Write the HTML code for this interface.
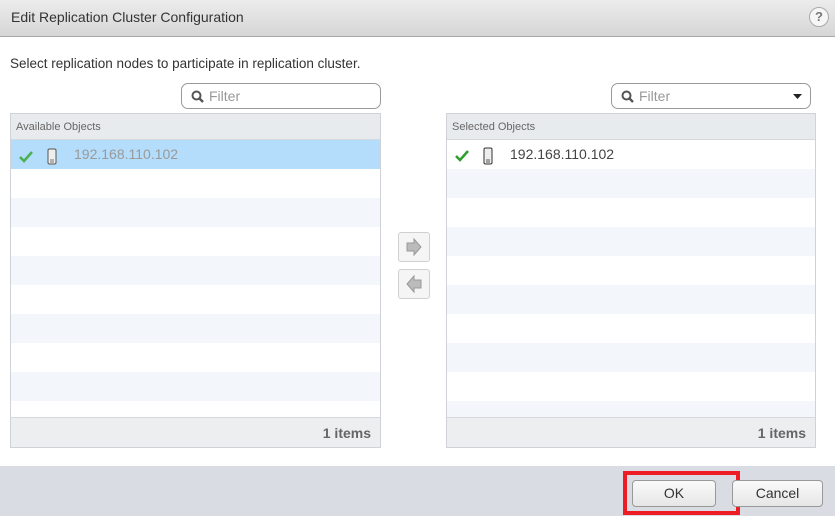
<!DOCTYPE html>
<html><head><style>
*{margin:0;padding:0;box-sizing:border-box}
body{width:835px;height:516px;overflow:hidden;background:#fff;font-family:"Liberation Sans",sans-serif;position:relative}
.title{position:absolute;left:0;top:0;width:835px;height:37px;background:linear-gradient(#ececec,#d6d6d6);border-bottom:1px solid #a8a8a8}
.title span{position:absolute;left:11px;top:9px;font-size:14px;color:#333}
.help{position:absolute;left:809px;top:7px;width:20px;height:20px;border-radius:50%;border:1px solid #aaa;background:#f6f6f6;font-size:13px;font-weight:bold;color:#777;text-align:center;line-height:18px}
.desc{position:absolute;left:10px;top:56px;font-size:13.5px;color:#333}
.filter{position:absolute;height:26px;border:1px solid #999;border-radius:7px;background:#fff;font-size:14px;color:#999}
.filter span{position:absolute;left:27px;top:4px}
.panel{position:absolute;top:113px;height:335px;border:1px solid #cfd3d7;background:#fff}
.hdr{height:26px;background:#e8ebee;border-bottom:1px solid #d6d9dc;font-size:11px;color:#666;padding:7px 0 0 5px}
.row{height:29px;background:#fff}
.s{background:#f3f6fa}
.foot{position:absolute;left:0;right:0;bottom:0;height:30px;background:#eceeef;border-top:1px solid #d6d9dc;font-size:14px;font-weight:bold;color:#666;text-align:right;padding:7px 9px 0 0}
.ip{position:absolute;top:146px;font-size:14px}
.arrbtn{position:absolute;left:398px;width:32px;height:30px;border:1px solid #d0d0d0;border-radius:3px;background:#f5f5f5}
.footer{position:absolute;left:0;top:466px;width:835px;height:50px;background:#d9dde3}
.btn{position:absolute;top:480px;height:27px;border:1px solid #999;border-radius:4px;background:linear-gradient(#fafafa,#e6e6e6);font-size:14px;color:#333;text-align:center;line-height:25px}
</style></head><body>
<div class="title"><span>Edit Replication Cluster Configuration</span><div class="help">?</div></div>
<div class="desc">Select replication nodes to participate in replication cluster.</div>

<div class="filter" style="left:181px;top:83px;width:200px"><svg style="position:absolute;left:9px;top:6px" width="13" height="13"><circle cx="5.5" cy="5.5" r="4" fill="none" stroke="#555" stroke-width="2"/><line x1="8.5" y1="8.5" x2="12" y2="12" stroke="#555" stroke-width="2.4"/></svg><span>Filter</span></div>
<div class="filter" style="left:611px;top:83px;width:200px"><svg style="position:absolute;left:9px;top:6px" width="13" height="13"><circle cx="5.5" cy="5.5" r="4" fill="none" stroke="#555" stroke-width="2"/><line x1="8.5" y1="8.5" x2="12" y2="12" stroke="#555" stroke-width="2.4"/></svg><span>Filter</span><svg style="position:absolute;left:181px;top:10px" width="9" height="6"><path d="M0 0H9L4.5 5Z" fill="#222"/></svg></div>

<div class="panel" style="left:10px;width:371px">
<div class="hdr">Available Objects</div>
<div class="row" style="background:#b4ddfb"></div><div class="row"></div><div class="row s"></div><div class="row"></div><div class="row s"></div><div class="row"></div><div class="row s"></div><div class="row"></div><div class="row s"></div><div class="row"></div>
<div class="foot">1 items</div>
</div>
<div class="panel" style="left:446px;width:370px">
<div class="hdr">Selected Objects</div>
<div class="row"></div><div class="row s"></div><div class="row"></div><div class="row s"></div><div class="row"></div><div class="row s"></div><div class="row"></div><div class="row s"></div><div class="row"></div><div class="row s"></div>
<div class="foot">1 items</div>
</div>

<svg style="position:absolute;left:19px;top:148px" width="80" height="18"><path d="M1 9L5 13L13 4" fill="none" stroke="#4caf50" stroke-width="2.5"/><rect x="29" y="1" width="8" height="15" rx="1.5" fill="#eee" stroke="#555"/><line x1="31" y1="12" x2="35" y2="12" stroke="#777"/><line x1="31" y1="14" x2="35" y2="14" stroke="#777"/></svg>
<div class="ip" style="left:74px;color:#999">192.168.110.102</div>
<svg style="position:absolute;left:455px;top:147px" width="80" height="20"><path d="M1 9L5 13L13 4" fill="none" stroke="#2e9e2e" stroke-width="2.5"/><rect x="29" y="1" width="8" height="16" rx="1.5" fill="#eee" stroke="#333"/><line x1="31" y1="13" x2="35" y2="13" stroke="#555"/><line x1="31" y1="15" x2="35" y2="15" stroke="#555"/></svg>
<div class="ip" style="left:510px;color:#444">192.168.110.102</div>

<div class="arrbtn" style="top:232px"><svg width="30" height="28"><path d="M8 10H15V6L22 14L15 22V18H8Z" fill="#bbb" stroke="#999"/></svg></div>
<div class="arrbtn" style="top:269px"><svg width="30" height="28"><path d="M22 10H15V6L8 14L15 22V18H22Z" fill="#bbb" stroke="#999"/></svg></div>

<div class="footer"></div>
<div style="position:absolute;left:623px;top:471px;width:117px;height:44px;border:4px solid #ee1c25"></div>
<div class="btn" style="left:632px;width:84px">OK</div>
<div class="btn" style="left:732px;width:91px">Cancel</div>
</body></html>
